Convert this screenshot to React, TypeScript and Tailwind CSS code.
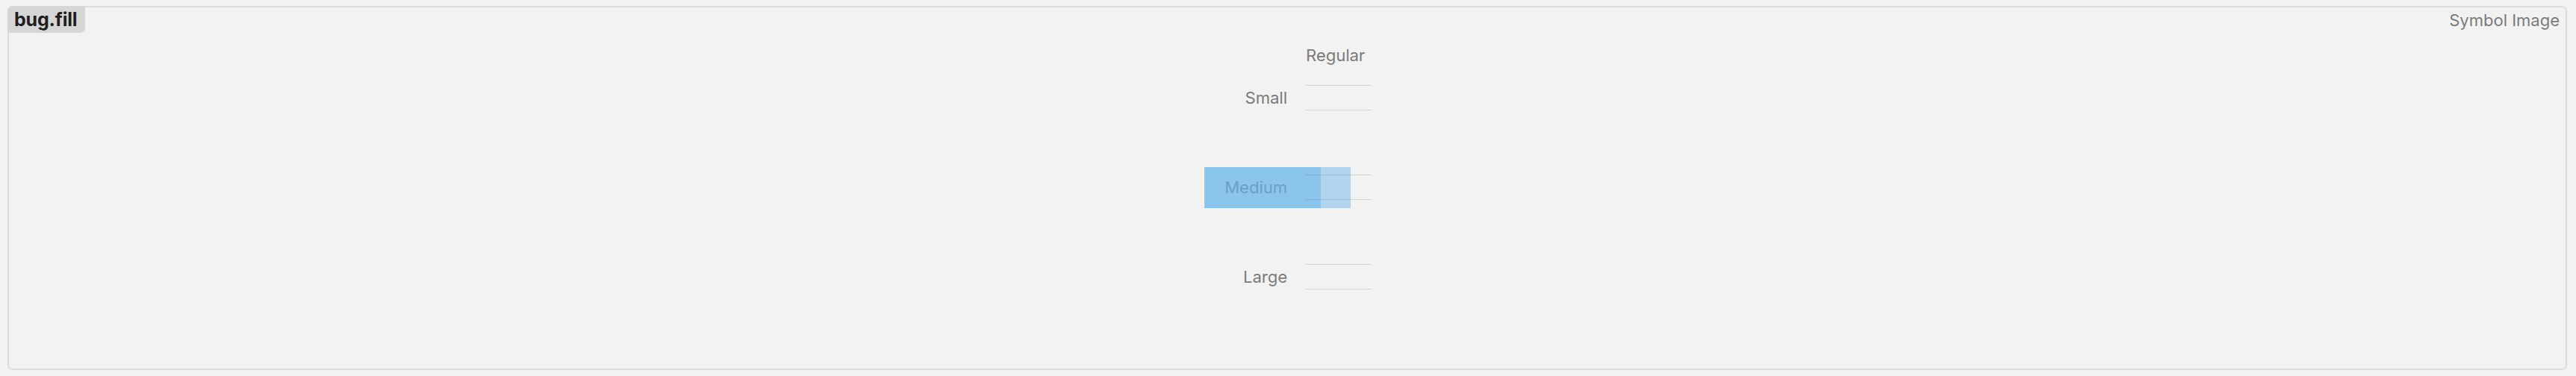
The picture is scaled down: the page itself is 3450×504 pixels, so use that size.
const font = { fontFamily: "Inter, 'Noto Sans', sans-serif" };

function Lines() {
  return (
    <div className="flex h-[34px] w-[88px] flex-col justify-between">
      <div className="h-px w-full bg-black/[0.12]" />
      <div className="h-px w-full bg-black/[0.12]" />
    </div>
  );
}

function SizeRow({ label, selected }: { label: string; selected?: boolean }) {
  return (
    <div className="relative flex h-[80px] items-center gap-[25px]">
      {selected && (
        <>
          <div className="absolute left-[2px] top-[13px] h-[55px] w-[196px] bg-[#b2d5ef]" />
          <div className="absolute left-[2px] top-[13px] h-[55px] w-[156px] bg-[#8bc5ec]" />
        </>
      )}
      <div
        className={
          "relative w-[113px] text-right text-[22px] leading-none " +
          (selected ? "text-[#6b9fc6]" : "text-[#7a7a7a]")
        }
      >
        {label}
      </div>
      <div className="relative">
        <Lines />
      </div>
    </div>
  );
}

export default function App() {
  return (
    <div
      className="h-[504px] w-full bg-[#f2f2f2] pb-2 pl-[10px] pr-[12px] pt-2"
      style={font}
    >
      <div className="relative h-full rounded-[7px] border-2 border-[#dcdcdc]">
        {/* title tag sits on top of the border */}
        <div className="absolute -left-[2px] -top-[2px] flex h-[36px] w-[104px] items-center rounded-br-[7px] rounded-tl-[7px] bg-[#d6d6d6] pl-[9px]">
          <span className="text-[25px] font-bold leading-none tracking-[-0.2px] text-[#1e1e1e]">
            bug.fill
          </span>
        </div>

        <div className="flex justify-end pr-[8px] pt-[4px]">
          <span className="text-[22px] leading-[26px] text-[#7a7a7a]">
            Symbol Image
          </span>
        </div>

        <div className="flex justify-center pt-[17px]">
          <div className="flex flex-col">
            <div className="flex h-[34px] items-center gap-[25px]">
              <div className="w-[113px]" />
              <div className="text-[22px] leading-none text-[#7a7a7a]">Regular</div>
            </div>
            <SizeRow label="Small" />
            <div className="h-[40px]" />
            <SizeRow label="Medium" selected />
            <div className="h-[40px]" />
            <SizeRow label="Large" />
          </div>
        </div>
      </div>
    </div>
  );
}
